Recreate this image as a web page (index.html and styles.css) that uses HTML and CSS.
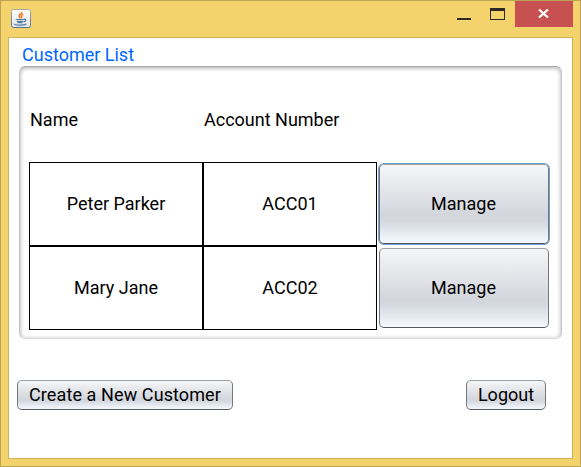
FILE: index.html
```html
<!DOCTYPE html>
<html lang="en">
<head>
<meta charset="utf-8">
<title>Customer List</title>
<link rel="stylesheet" href="styles.css">
</head>
<body>
<div class="window">
  <header class="titlebar">
    <svg class="app-icon" width="20" height="19" viewBox="0 0 20 19">
      <defs><linearGradient id="tile" x1="0" y1="0" x2="0" y2="1"><stop offset="0" stop-color="#fff"/><stop offset="1" stop-color="#dfe2e6"/></linearGradient>
      <linearGradient id="edge" x1="0" y1="0" x2="0" y2="1"><stop offset="0" stop-color="#a9aaa5"/><stop offset="1" stop-color="#56738f"/></linearGradient></defs>
      <rect x=".5" y=".5" width="19" height="18" rx="2" fill="url(#tile)" stroke="url(#edge)"/>
      <path d="M10.600 2.800c.7 2.200-3.500 2.700-2.500 4.700L9.500 9.300M12.300 5.200c-2.200.8-2.400 1.600-1.500 2.700L9.900 9.400" fill="none" stroke="#ee8030" stroke-width="1.600"/>
      <path d="M4.800 10.500h8M5.800 12.300h6.400M6.500 13.700h5M12.800 10.300c2.800-.6 2.600 2.200-.3 2.700M3.300 15.200c2.300 1.300 9.200 1.300 12-.3" fill="none" stroke="#4f7c9f" stroke-width="1.200"/>
    </svg>
    <div class="controls">
      <svg class="glyphs" width="58" height="26" viewBox="0 0 58 26" shape-rendering="crispEdges">
        <path d="M0 17h14v2H0zM33 7h15v12H33zm1 3v8h13v-8z" fill="#2b2926" fill-rule="evenodd"/>
      </svg>
      <div class="close"><svg width="58" height="26" viewBox="0 0 58 26"><path d="M24 8.500L33 16.500M33 8.500L24 16.500" stroke="#fff" stroke-width="2.300"/></svg></div>
    </div>
  </header>
  <main class="content">
    <h1 class="title">Customer List</h1>
    <section class="panel">
      <div class="head">Name</div><div class="head">Account Number</div><div></div>
      <div class="cell">Peter Parker</div><div class="cell">ACC01</div><button class="btn manage focused">Manage</button>
      <div class="cell">Mary Jane</div><div class="cell">ACC02</div><button class="btn manage">Manage</button>
    </section>
    <footer class="actions">
      <button class="btn create">Create a New Customer</button>
      <button class="btn logout">Logout</button>
    </footer>
  </main>
</div>
</body>
</html>
```
FILE: styles.css
```css
* { box-sizing: border-box; }
body { margin: 0; font: 18px/22px Roboto, sans-serif; color: #000; }
.window {
  width: 581px; height: 467px; padding: 0 7px 7px;
  background: #f5d36c; border: 1px solid #bda253;
}
.titlebar { display: flex; justify-content: space-between; height: 36px; padding-left: 3px; }
.app-icon { margin-top: 8px; }
.controls { display: flex; }
.glyphs { display: block; }
.close { width: 58px; height: 26px; background: #c75050; }
.close svg { display: block; }
.content { height: 422px; padding: 6px 10px 0 8px; background: #fff; border: 1px solid #d1b45c; }
.title { margin: 0 0 0 5px; font-size: 18px; font-weight: 400; line-height: 22px; color: #0066ff; }
.panel {
  display: grid; grid-template: repeat(3, 84px) / repeat(3, 174px);
  width: 543px; height: 273px; margin-left: 2px; padding: 11px 9px;
  border: 1px solid; border-color: #a9a9a9 #c4c4c4 #dadada; border-radius: 6px;
  box-shadow: inset 0 1px 4px #a8a8a8;
}
.head { display: flex; align-items: center; padding-left: 1px; }
.cell { display: flex; align-items: center; justify-content: center; border: 1px solid #000; }
.btn {
  padding: 0; font: inherit; color: #000;
  border: 1px solid; border-color: #9b9ea3 #74777c #55585e; border-radius: 5px;
  background: linear-gradient(#f5f6f7 0%, #e2e4e8 35%, #d3d6dd 64%, #d5d8e0 72%, #f5f9ff 100%);
}
.manage { margin: 2px; padding-right: 1px; }
.focused { box-shadow: 0 0 0 1px #6da0cf; }
.actions { display: flex; justify-content: space-between; padding-right: 16px; margin-top: 41px; }
.create { width: 216px; height: 30px; letter-spacing: .1px; }
.logout { width: 80px; height: 30px; }
```
